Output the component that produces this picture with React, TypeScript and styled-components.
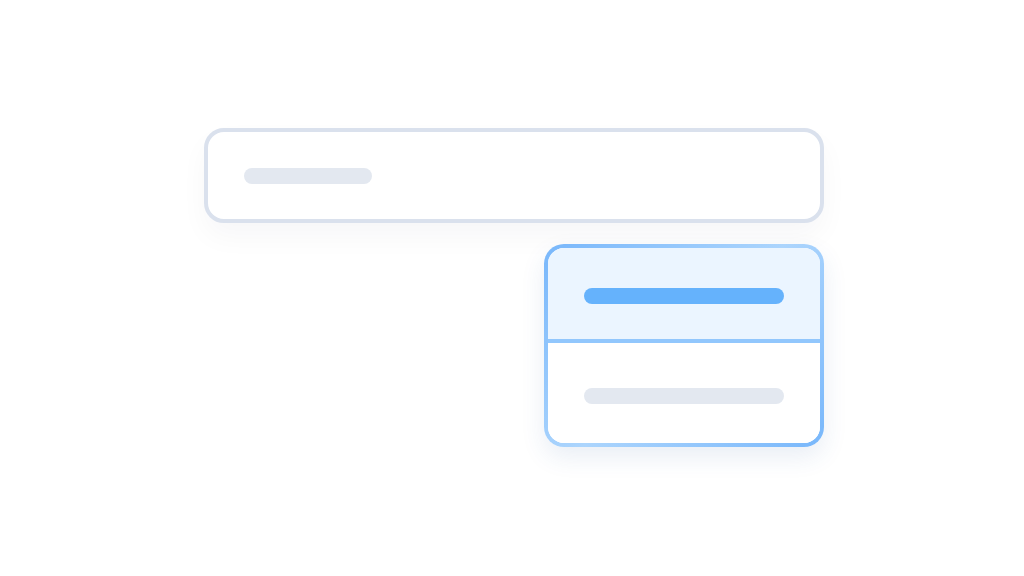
import React from 'react';
import styled, { createGlobalStyle } from 'styled-components';

const GlobalStyle = createGlobalStyle`
  html, body {
    margin: 0;
    padding: 0;
    background: #ffffff;
    font-family: Inter, 'Liberation Sans', sans-serif;
  }
`;

const Page = styled.div`
  width: 1024px;
  height: 576px;
  box-sizing: border-box;
  padding: 128px 0 0 204px;
  background: #ffffff;
`;

const Stack = styled.div`
  width: 620px;
  display: flex;
  flex-direction: column;
  gap: 21px;
`;

const InputBox = styled.div`
  box-sizing: border-box;
  height: 95px;
  border: 4px solid #dae1ed;
  border-radius: 20px;
  background: #ffffff;
  padding: 36px;
  box-shadow: 0 14px 28px rgba(30, 41, 59, 0.035);
`;

const Bar = styled.div<{ $width: number; $tone?: 'gray' | 'blue' }>`
  width: ${(p) => p.$width}px;
  height: 16px;
  border-radius: 8px;
  background: ${(p) => (p.$tone === 'blue' ? '#65b2fc' : '#e3e8f0')};
`;

const Menu = styled.div`
  align-self: flex-end;
  box-sizing: border-box;
  width: 280px;
  border: 4px solid transparent;
  border-radius: 20px;
  background:
    linear-gradient(#ffffff, #ffffff) padding-box,
    linear-gradient(135deg, #78b7fb 0%, #acd5fd 50%, #78b7fb 100%) border-box;
  box-shadow: 0 10px 24px rgba(40, 90, 160, 0.1);
  overflow: hidden;
`;

const Option = styled.div<{ $active?: boolean }>`
  box-sizing: border-box;
  height: 91px;
  padding: 40px 36px 0;
  background: ${(p) => (p.$active ? '#ebf5ff' : '#ffffff')};
  & + & {
    border-top: 4px solid #92c7fd;
    height: 104px;
    padding-top: 45px;
  }
`;

export default function App(): JSX.Element {
  return (
    <>
      <GlobalStyle />
      <Page>
        <Stack>
          <InputBox>
            <Bar $width={128} />
          </InputBox>
          <Menu>
            <Option $active>
              <Bar $width={200} $tone="blue" />
            </Option>
            <Option>
              <Bar $width={200} />
            </Option>
          </Menu>
        </Stack>
      </Page>
    </>
  );
}
